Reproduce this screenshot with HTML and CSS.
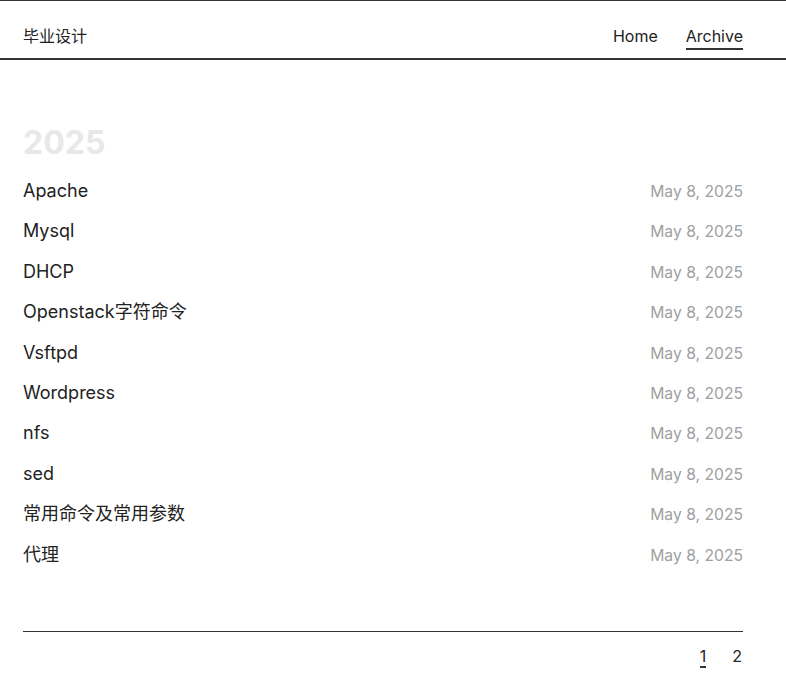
FILE: index.html
```html
<!DOCTYPE html>
<html lang="zh">
<head>
<meta charset="utf-8">
<title>Archive</title>
<link rel="stylesheet" href="styles.css">
</head>
<body>
<header class="site-header">
  <div class="header-inner">
    <a class="site-title" href="#">毕业设计</a>
    <nav class="nav">
      <a class="nav-link" href="#">Home</a>
      <a class="nav-link active" href="#">Archive</a>
    </nav>
  </div>
</header>
<main class="main">
  <h2 class="year">2025</h2>
  <ul class="posts">
    <li class="post"><a href="#">Apache</a><span class="date">May 8, 2025</span></li>
    <li class="post"><a href="#">Mysql</a><span class="date">May 8, 2025</span></li>
    <li class="post"><a href="#">DHCP</a><span class="date">May 8, 2025</span></li>
    <li class="post"><a href="#">Openstack字符命令</a><span class="date">May 8, 2025</span></li>
    <li class="post"><a href="#">Vsftpd</a><span class="date">May 8, 2025</span></li>
    <li class="post"><a href="#">Wordpress</a><span class="date">May 8, 2025</span></li>
    <li class="post"><a href="#">nfs</a><span class="date">May 8, 2025</span></li>
    <li class="post"><a href="#">sed</a><span class="date">May 8, 2025</span></li>
    <li class="post"><a href="#">常用命令及常用参数</a><span class="date">May 8, 2025</span></li>
    <li class="post"><a href="#">代理</a><span class="date">May 8, 2025</span></li>
  </ul>
  <div class="pagination">
    <a class="page current" href="#">1</a>
    <a class="page" href="#">2</a>
  </div>
</main>
</body>
</html>
```
FILE: styles.css
```css
* { box-sizing: border-box; }
html, body { margin: 0; padding: 0; background: #fff; }
body {
  font-family: Inter, "Noto Sans CJK SC", sans-serif;
  color: #222;
}
a { color: inherit; text-decoration: none; }
.site-header {
  border-top: 1px solid #333;
  border-bottom: 2px solid #333;
}
.header-inner {
  width: 720px;
  margin-left: 23px;
  height: 57px;
  display: flex;
  align-items: center;
  justify-content: space-between;
  padding-top: 11px;
}
.site-title {
  font-size: 16px;
  color: #222;
}
.nav { display: flex; gap: 28px; padding-top: 5px; }
.nav-link {
  font-size: 16px;
  color: #222;
  padding-bottom: 2px;
  border-bottom: 2px solid transparent;
}
.nav-link.active { border-bottom-color: #333; }
.main {
  width: 720px;
  margin-left: 23px;
  padding-top: 63px;
}
.year {
  margin: 0 0 16px;
  font-size: 32px;
  font-weight: 700;
  color: #e8e8e8;
  line-height: 40px;
}
.posts { list-style: none; margin: 0; padding: 0; }
.post {
  display: flex;
  justify-content: space-between;
  align-items: baseline;
  height: 40.4px;
  line-height: 24px;
}
.post a { font-size: 18px; color: #222; }
.date { font-size: 15.7px; color: #a0a0a0; }
.pagination {
  margin-top: 48px;
  border-top: 1px solid #333;
  display: flex;
  justify-content: flex-end;
  gap: 26px;
  padding-top: 14px;
  padding-right: 1px;
}
.page { font-size: 16px; color: #222; line-height: 20px; }
.page.current { border-bottom: 2px solid #333; }
```
